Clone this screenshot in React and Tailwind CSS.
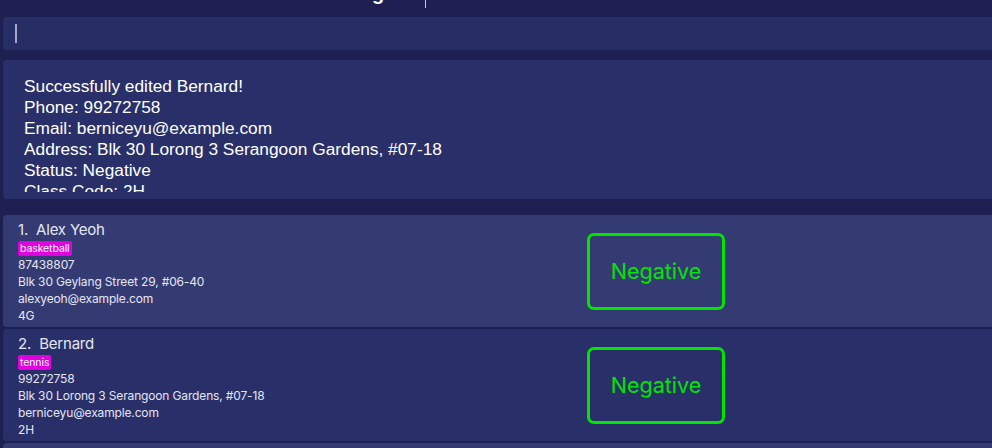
import React from 'react';

const persons = [
  {
    name: 'Alex Yeoh',
    tag: 'basketball',
    phone: '87438807',
    address: 'Blk 30 Geylang Street 29, #06-40',
    email: 'alexyeoh@example.com',
    classCode: '4G',
    status: 'Negative',
  },
  {
    name: 'Bernard',
    tag: 'tennis',
    phone: '99272758',
    address: 'Blk 30 Lorong 3 Serangoon Gardens, #07-18',
    email: 'berniceyu@example.com',
    classCode: '2H',
    status: 'Negative',
  },
  {
    name: 'Charlotte Oliveiro',
    tag: 'neighbours',
    phone: '93210283',
    address: 'Blk 11 Ang Mo Kio Street 74, #11-04',
    email: 'charlotte@example.com',
    classCode: '3A',
    status: 'Negative',
  },
];

const resultLines = [
  'Successfully edited Bernard!',
  'Phone: 99272758',
  'Email: berniceyu@example.com',
  'Address: Blk 30 Lorong 3 Serangoon Gardens, #07-18',
  'Status: Negative',
  'Class Code: 2H',
];

const PersonCard = ({ person, index }) => (
  <div
    className={`flex items-center h-[112px] rounded-l-[4px] ${
      index % 2 === 0 ? 'bg-[#343b73]' : 'bg-[#293069]'
    }`}
  >
    <div className="w-[584px] self-start pl-[15px] pt-[5px] text-[#e4e5f2] font-['Inter',sans-serif]">
      <div className="text-[15px] leading-[20px] tracking-[-0.2px]">
        {index + 1}.&nbsp; {person.name}
      </div>
      <div className="flex mt-[1px]">
        <span className="bg-[#e000e0] text-white text-[10.5px] leading-[15px] px-[2px] rounded-[2px] tracking-[-0.1px]">
          {person.tag}
        </span>
      </div>
      <div className="text-[12px] leading-[17px] tracking-[-0.15px]">
        <div>{person.phone}</div>
        <div>{person.address}</div>
        <div>{person.email}</div>
        <div>{person.classCode}</div>
      </div>
    </div>
    <div className="w-[138px] h-[77px] border-[3px] border-[#00e600] rounded-[7px] flex items-center justify-center text-[#00e600] text-[21.5px] font-['Inter',sans-serif]">
      {person.status}
    </div>
  </div>
);

export default function App() {
  return (
    <div className="w-[992px] h-[448px] overflow-hidden bg-[#1d2051]">
      {/* clipped menu strip */}
      <div className="h-[17px] overflow-hidden flex items-start">
        <span className="ml-[372px] mt-[-19px] text-white text-[20px] font-bold leading-[24px] font-['Liberation_Sans',sans-serif]">
          g
        </span>
        <span className="ml-[41px] w-px h-[8px] bg-[#c8cad8]" />
      </div>

      {/* command box */}
      <div className="ml-[3px] h-[33px] bg-[#272e66] rounded-l-[4px] flex items-center pl-[12px]">
        <span className="w-[2px] h-[19px] bg-[#a3a6c4]" />
      </div>

      {/* result display */}
      <div className="ml-[3px] mt-[10px] h-[139px] bg-[#293069] rounded-l-[4px] pt-[16px] pl-[21px]">
        <div className="h-[116px] overflow-hidden text-white text-[17.3px] leading-[21px] font-['Liberation_Sans',sans-serif]">
          {resultLines.map((line) => (
            <div key={line}>{line}</div>
          ))}
        </div>
      </div>

      {/* person list */}
      <div className="ml-[3px] mt-[16px] flex flex-col gap-[2px]">
        {persons.map((p, i) => (
          <PersonCard key={p.name} person={p} index={i} />
        ))}
      </div>
    </div>
  );
}
